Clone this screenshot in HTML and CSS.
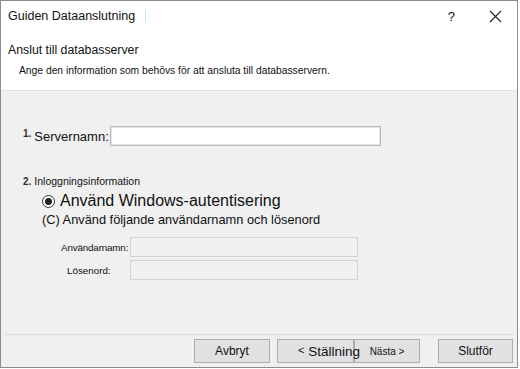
FILE: index.html
```html
<!DOCTYPE html>
<html lang="sv">
<head>
    <meta charset="UTF-8">
    <title>Guiden Dataanslutning</title>
    <link rel="stylesheet" href="styles.css">
</head>
<body>
    <div class="dialog">
        <div class="titlebar">
            <span class="title">Guiden Dataanslutning</span>
            <span class="caret"></span>
            <span class="help">?</span>
            <span class="close">
                <svg width="13" height="13" viewBox="0 0 13 13">
                    <path d="M1 1 L12 12 M12 1 L1 12" stroke="#222" stroke-width="1.1" fill="none"/>
                </svg>
            </span>
        </div>

        <div class="header">
            <div class="heading">Anslut till databasserver</div>
            <div class="subheading">Ange den information som behövs för att ansluta till databasservern.</div>
        </div>

        <div class="content">
            <div class="server-row">
                <span class="step">1.</span>
                <label class="server-label" for="server">Servernamn:</label>
                <input class="field" id="server" type="text">
            </div>

            <div class="login-title">
                <span class="step">2.</span>
                <span>Inloggningsinformation</span>
            </div>

            <div class="radio-row">
                <span class="radio"><span class="dot"></span></span>
                <span>Använd Windows-autentisering</span>
            </div>
            <div class="option-row">(C) Använd följande användarnamn och lösenord</div>

            <div class="cred-row user">
                <span class="cred-label">Användarnamn:</span>
                <input class="field disabled" type="text" disabled>
            </div>
            <div class="cred-row">
                <span class="cred-label pass">Lösenord:</span>
                <input class="field disabled" type="password" disabled>
            </div>
        </div>

        <div class="footer">
            <div class="separator"></div>
            <div class="buttons">
                <button class="btn">Avbryt</button>
                <button class="btn back"><span class="arrow">&lt;</span> Ställning</button>
                <button class="btn next">Nästa &gt;</button>
                <button class="btn finish">Slutför</button>
            </div>
        </div>
    </div>
</body>
</html>
```

FILE: styles.css
```css
body {
    margin: 0;
    background: white;
    font-family: "Liberation Sans", Arial, sans-serif;
    color: #111;
}

.dialog {
    width: 518px;
    height: 368px;
    box-sizing: border-box;
    border: 1px solid #8c8c8c;
    display: flex;
    flex-direction: column;
    background: #f0f0f0;
}

.titlebar {
    height: 30px;
    display: flex;
    align-items: center;
    background: white;
    padding-left: 7px;
    font-size: 12.5px;
}

.caret {
    width: 1px;
    height: 12px;
    background: #bfeaf2;
    margin-left: 10px;
}

.help {
    margin-left: auto;
    font-size: 13px;
    margin-right: 34px;
}

.close {
    display: flex;
    margin-right: 15px;
}

.header {
    background: white;
    height: 59px;
    border-bottom: 1px solid #e2e2e2;
    padding-left: 7px;
}

.heading {
    font-size: 12.3px;
    margin-top: 12px;
}

.subheading {
    font-size: 10.3px;
    margin-top: 8px;
    padding-left: 11px;
}

.content {
    flex: 1;
    padding-left: 22px;
}

.step {
    font-size: 10px;
    font-weight: bold;
    color: #333;
}

.server-row {
    display: flex;
    align-items: center;
    margin-top: 35px;
}

.server-row .step {
    align-self: flex-start;
    margin-top: 2px;
    margin-right: 3px;
}

.server-label {
    font-size: 13px;
}

.field {
    box-sizing: border-box;
    height: 20px;
    border: 1px solid #b9b9b9;
    box-shadow: inset 0 0 0 1px #e4e4e4;
    background: white;
    margin: 0 0 0 1px;
    padding: 0;
}

#server {
    width: 271px;
}

.login-title {
    margin-top: 29px;
    font-size: 10.5px;
    display: flex;
    align-items: center;
    gap: 3px;
}

.radio-row {
    display: flex;
    align-items: center;
    gap: 5px;
    margin-top: 5px;
    padding-left: 19px;
    font-size: 16px;
}

.radio {
    width: 11px;
    height: 11px;
    border: 1px solid #333;
    border-radius: 50%;
    display: flex;
    align-items: center;
    justify-content: center;
    background: white;
}

.dot {
    width: 7px;
    height: 7px;
    border-radius: 50%;
    background: #222;
}

.option-row {
    padding-left: 19px;
    font-size: 12.8px;
    margin-top: 2px;
}

.cred-row {
    display: flex;
    align-items: center;
    margin-top: 3px;
    padding-left: 38px;
}

.cred-row.user {
    margin-top: 10px;
}

.cred-label {
    width: 68px;
    font-size: 9.8px;
    letter-spacing: -0.15px;
    white-space: nowrap;
}

.cred-label.pass {
    padding-left: 6px;
    width: 62px;
    letter-spacing: 0;
}

.field.disabled {
    width: 228px;
    background: #f0f0f0;
    border-color: #d4d4d4;
    box-shadow: none;
}

.footer {
    padding: 0 3px 4px 3px;
}

.separator {
    height: 1px;
    background: #dcdcdc;
    margin-bottom: 4px;
}

.buttons {
    display: flex;
    justify-content: flex-end;
    padding-right: 1px;
}

.btn {
    height: 24px;
    width: 76px;
    background: #e1e1e1;
    border: 1px solid #adadad;
    font-family: "Liberation Sans", Arial, sans-serif;
    font-size: 12px;
    color: #111;
    padding: 0;
    margin: 0;
}

/* label text spills over the next button, as in the original */
.back {
    position: relative;
    z-index: 1;
    margin-left: 7px;
    width: 77px;
    font-size: 13.5px;
    white-space: nowrap;
    overflow: visible;
    text-align: left;
    padding-left: 20px;
}

.arrow {
    font-size: 11px;
    vertical-align: 2px;
}

.next {
    width: 66px;
    font-size: 10px;
}

.finish {
    margin-left: 18px;
    width: 75px;
}
```
